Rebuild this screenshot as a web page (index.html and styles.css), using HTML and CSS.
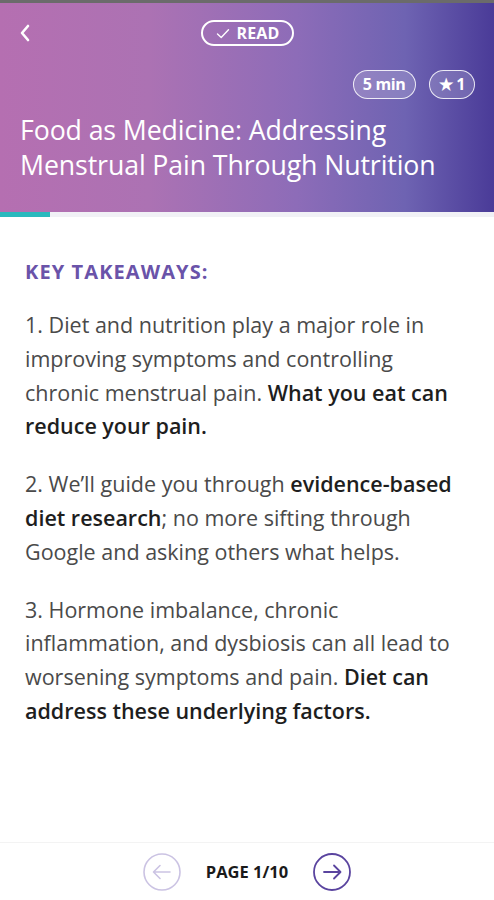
FILE: index.html
```html
<!DOCTYPE html>
<html lang="en">
<head>
    <meta charset="UTF-8">
    <meta name="viewport" content="width=device-width, initial-scale=1.0">
    <title>Food as Medicine</title>
    <link rel="stylesheet" href="styles.css">
</head>
<body>
    <header class="hero">
        <div class="top-row">
            <a class="back" href="#">
                <svg width="14" height="22" viewBox="0 0 14 22"><path d="M10 4 L4 11 L10 18" fill="none" stroke="#fff" stroke-width="2.6" stroke-linecap="round" stroke-linejoin="round"/></svg>
            </a>
            <span class="read-pill">
                <svg width="14" height="11" viewBox="0 0 14 11"><path d="M1.5 6 L5.2 9.4 L12.5 1.8" fill="none" stroke="#fff" stroke-width="1.4" stroke-linecap="round" stroke-linejoin="round"/></svg>
                READ
            </span>
        </div>
        <div class="meta">
            <span class="chip">5 min</span>
            <span class="chip">&#9733; 1</span>
        </div>
        <h1>Food as Medicine: Addressing Menstrual Pain Through Nutrition</h1>
    </header>
    <div class="progress"><div class="progress-fill" style="width: 50px"></div></div>

    <main class="content">
        <h2>KEY TAKEAWAYS:</h2>
        <p>1. Diet and nutrition play a major role in improving symptoms and controlling chronic menstrual pain. <b>What you eat can reduce your pain.</b></p>
        <p>2. We’ll guide you through <b>evidence-based diet research</b>; no more sifting through Google and asking others what helps.</p>
        <p>3. Hormone imbalance, chronic inflammation, and dysbiosis can all lead to worsening symptoms and pain. <b>Diet can address these underlying factors.</b></p>
    </main>

    <footer class="pager">
        <a class="nav-btn disabled" href="#">
            <svg width="38" height="38" viewBox="0 0 38 38"><circle cx="19" cy="19" r="18" fill="none" stroke="currentColor" stroke-width="1.6"/><path d="M27 19 H11 M17 12.5 L10.5 19 L17 25.5" fill="none" stroke="currentColor" stroke-width="1.6" stroke-linecap="round" stroke-linejoin="round"/></svg>
        </a>
        <span class="page-label">PAGE 1/10</span>
        <a class="nav-btn" href="#">
            <svg width="38" height="38" viewBox="0 0 38 38"><circle cx="19" cy="19" r="18" fill="none" stroke="currentColor" stroke-width="1.8"/><path d="M11 19 H27 M21 12.5 L27.5 19 L21 25.5" fill="none" stroke="currentColor" stroke-width="1.8" stroke-linecap="round" stroke-linejoin="round"/></svg>
        </a>
    </footer>
</body>
</html>
```

FILE: styles.css
```css
body {
    margin: 0;
    padding: 0;
    font-family: 'Open Sans', 'Noto Sans', sans-serif;
    background: #fff;
    color: #555;
    width: 494px;
    height: 900px;
    display: flex;
    flex-direction: column;
}
.hero {
    height: 212px;
    box-sizing: border-box;
    padding: 17px 19px 0 20px;
    border-top: 3px solid #6b6b6b;
    background: linear-gradient(90deg, #b56fb1 0%, #ac72b3 30%, #8d6cb8 60%, #6e63b2 82%, #4a3b98 100%);
    color: #fff;
}
.top-row {
    position: relative;
    height: 26px;
    display: flex;
    justify-content: center;
    align-items: center;
}
.back {
    position: absolute;
    left: -2px;
    top: 2px;
    display: flex;
}
.read-pill {
    display: flex;
    align-items: center;
    gap: 6px;
    height: 26px;
    box-sizing: border-box;
    padding: 0 12px 0 13px;
    border: 2px solid #fff;
    border-radius: 14px;
    font-size: 16px;
    font-weight: 700;
    letter-spacing: 0.2px;
}
.meta {
    display: flex;
    justify-content: flex-end;
    gap: 13px;
    margin-top: 24px;
}
.chip {
    height: 29px;
    box-sizing: border-box;
    padding: 0 9px;
    border: 1.5px solid rgba(255, 255, 255, 0.85);
    border-radius: 15px;
    background: rgba(255, 255, 255, 0.18);
    font-size: 16px;
    font-weight: 700;
    line-height: 26px;
    letter-spacing: -0.3px;
}
.hero h1 {
    margin: 13px 0 0 0;
    font-size: 26.7px;
    font-weight: 400;
    line-height: 35px;
    letter-spacing: -0.1px;
}
.progress {
    height: 5px;
    background: #f1f1f6;
}
.progress-fill {
    height: 100%;
    background: #2ab9bd;
}
.content {
    flex: 1;
    padding: 41px 30px 0 25px;
}
.content h2 {
    margin: 0 0 23px 0;
    font-size: 20px;
    font-weight: 700;
    color: #6a53a9;
    letter-spacing: 1.1px;
}
.content p {
    margin: 0 0 24px 0;
    font-size: 21.5px;
    line-height: 33.8px;
    color: #4a4a4a;
}
.content b {
    font-weight: 600;
    color: #1e1e1e;
}
.pager {
    height: 57px;
    border-top: 1px solid #f3f3f3;
    display: flex;
    justify-content: center;
    align-items: center;
    gap: 24px;
}
.nav-btn {
    display: flex;
    color: #5a449f;
}
.nav-btn.disabled {
    color: #cbc3e3;
}
.page-label {
    font-size: 16.5px;
    font-weight: 700;
    color: #1a1a1a;
    width: 84px;
    text-align: center;
    white-space: nowrap;
}
```
